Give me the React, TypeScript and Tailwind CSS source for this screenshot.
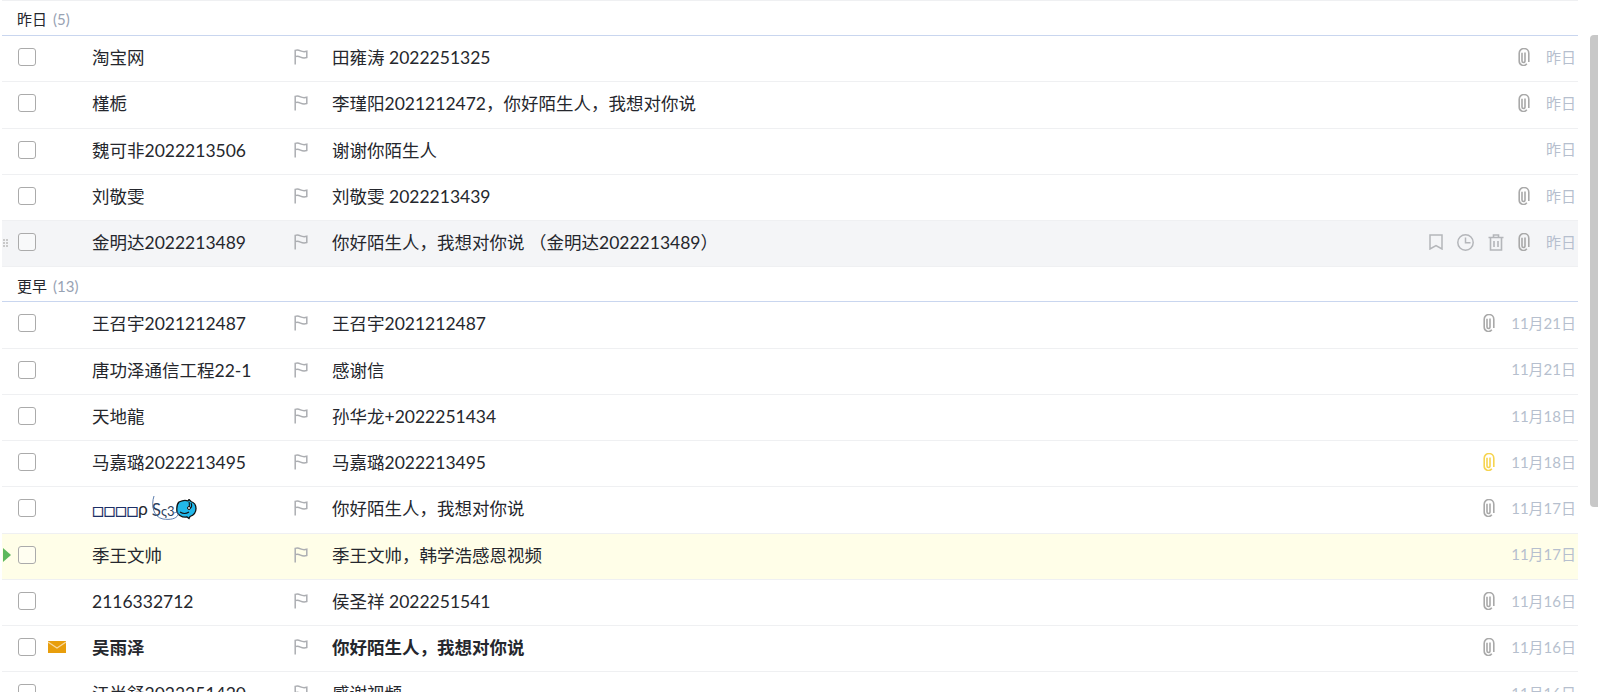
const font = { fontFamily: 'Lato, "Noto Sans CJK SC", "Noto Sans", sans-serif' };

type Mail = {
  name: string;
  subject: string;
  date: string;
  clip?: 'gray' | 'yellow';
  unread?: boolean;
  hover?: boolean;
  current?: boolean;
  fancy?: boolean;
};

const yesterday: Mail[] = [
  { name: '淘宝网', subject: '田雍涛 2022251325', date: '昨日', clip: 'gray' },
  { name: '槿栀', subject: '李瑾阳2021212472，你好陌生人，我想对你说', date: '昨日', clip: 'gray' },
  { name: '魏可非2022213506', subject: '谢谢你陌生人', date: '昨日' },
  { name: '刘敬雯', subject: '刘敬雯 2022213439', date: '昨日', clip: 'gray' },
  { name: '金明达2022213489', subject: '你好陌生人，我想对你说 （金明达2022213489）', date: '昨日', clip: 'gray', hover: true },
];

const earlier: Mail[] = [
  { name: '王召宇2021212487', subject: '王召宇2021212487', date: '11月21日', clip: 'gray' },
  { name: '唐功泽通信工程22-1', subject: '感谢信', date: '11月21日' },
  { name: '天地龍', subject: '孙华龙+2022251434', date: '11月18日' },
  { name: '马嘉璐2022213495', subject: '马嘉璐2022213495', date: '11月18日', clip: 'yellow' },
  { name: 'ρ', subject: '你好陌生人，我想对你说', date: '11月17日', clip: 'gray', fancy: true },
  { name: '季王文帅', subject: '季王文帅，韩学浩感恩视频', date: '11月17日', current: true },
  { name: '2116332712', subject: '侯圣祥 2022251541', date: '11月16日', clip: 'gray' },
  { name: '吴雨泽', subject: '你好陌生人，我想对你说', date: '11月16日', clip: 'gray', unread: true },
  { name: '江尚舒2023251420', subject: '感谢视频', date: '11月16日' },
];

function FlagIcon() {
  return (
    <svg width="14" height="16" viewBox="0 0 14 16" fill="none" stroke="#acaeb2" strokeWidth="1.5">
      <path d="M1.2 15.5V1.4C3 .9 4.6 1 6.5 1.900c2 .9 3.900 1 6.300.4v6.200c-2.400.7-4.300.5-6.300-.4-1.900-.9-3.500-1-5.300-.5" />
    </svg>
  );
}

function ClipIcon({ color }: { color: 'gray' | 'yellow' }) {
  return (
    <svg width="12" height="18" viewBox="0 0 12 18" fill="none" stroke={color === 'yellow' ? '#f6d44f' : '#a9a9a9'} strokeWidth="1.6">
      <path d="M10.800 14V5.300a4.800 4.800 0 0 0-9.600 0v8a4.200 4.200 0 0 0 7.600 2.400M4 4.800v8.200a1.500 1.500 0 0 0 3 0V4.600" />
    </svg>
  );
}

function BookmarkIcon() {
  return (
    <svg width="14" height="16" viewBox="0 0 14 16" fill="none" stroke="#b4b6ba" strokeWidth="1.5">
      <path d="M1 1h12v14l-6-3.500L1 15z" />
    </svg>
  );
}

function ClockIcon() {
  return (
    <svg width="17" height="17" viewBox="0 0 17 17" fill="none" stroke="#b4b6ba" strokeWidth="1.5">
      <circle cx="8.500" cy="8.500" r="7.700" />
      <path d="M8.500 3.500v5.200h5" />
    </svg>
  );
}

function TrashIcon() {
  return (
    <svg width="16" height="17" viewBox="0 0 16 17" fill="none" stroke="#b4b6ba" strokeWidth="1.6">
      <path d="M.5 3.500h15M5.500 3V1h5v2M2.500 3.500V16h11V3.500M6 7v6M10 7v6" />
    </svg>
  );
}

function Envelope() {
  return (
    <svg width="18" height="12" viewBox="0 0 18 12" className="block">
      <rect width="18" height="12" fill="#e89e0c" />
      <path d="M0 1l9 6 9-6" fill="none" stroke="#f7d9a0" strokeWidth="1.2" />
    </svg>
  );
}

function Fish() {
  return (
    <svg width="21" height="21" viewBox="0 0 21 21" className="block">
      <path d="M3 3c3-1.500 7-2 9-1l1-1.500 2 2c3 1 5 4 5 7 0 4-3 7-6 8l-1 2-2-1.500c-4 .5-8-1-10-5C.5 9 1 5 3 3z" fill="#22b8ea" stroke="#111" strokeWidth="1.300" />
      <path d="M13 3c1 3-.5 5 1 6 2 0 2-3 1-5M4 13c3 2 6 2 9 0" fill="none" stroke="#111" strokeWidth="1.100" />
      <circle cx="13" cy="9" r="1.500" fill="#fff" stroke="#111" />
    </svg>
  );
}

function Squiggle() {
  return (
    <svg width="28" height="26" viewBox="0 0 28 26" fill="none" className="absolute left-0 top-[-2px]" stroke="#4b6fa5" strokeWidth="0.900">
      <path d="M2 1C-1 10 1 22 11 24c7 1 13 0 15-4 1-3-2-3-4-2" />
    </svg>
  );
}

function MailRow({ mail }: { mail: Mail }) {
  const bg = mail.hover ? 'bg-[#f4f5f7]' : mail.current ? 'bg-[#fffee8]' : 'bg-white';
  return (
    <div className={`relative flex h-[46.25px] items-center border-b border-[#eff0f2] pb-[3px] ${bg}`}>
      {mail.hover && (
        <div className="absolute left-[1px] top-[18px] grid grid-cols-2 gap-[1px]">
          <i className="h-[2px] w-[2px] bg-[#c9c9c9]" />
          <i className="h-[2px] w-[2px] bg-[#c9c9c9]" />
          <i className="h-[2px] w-[2px] bg-[#c9c9c9]" />
          <i className="h-[2px] w-[2px] bg-[#c9c9c9]" />
          <i className="h-[2px] w-[2px] bg-[#c9c9c9]" />
          <i className="h-[2px] w-[2px] bg-[#c9c9c9]" />
        </div>
      )}
      {mail.current && (
        <div className="absolute left-[1px] top-[14px] h-0 w-0 border-y-[7px] border-l-[8px] border-y-transparent border-l-[#5cb85c]" />
      )}
      <div className="ml-[16px] h-[18px] w-[18px] rounded-[3px] border-[1.5px] border-[#ababab] bg-white/40" />
      <div className="ml-[12px] flex w-[18px] justify-center">{mail.unread && <Envelope />}</div>
      <div className={`ml-[26px] flex w-[201px] items-center pt-[2px] text-[17.5px] text-[#25272d] ${mail.unread ? 'font-bold' : ''}`}>
        {mail.fancy && <span className="text-[20px] leading-none tracking-[-0.5px] text-[#1c2f66]">□□□□</span>}
        {mail.name}
        {mail.fancy && (
          <span className="relative ml-[4px] flex items-center">
            <Squiggle />
            <span className="text-[17px] text-[#2d3e5c]">S</span>
            <span className="mr-[1px] mt-[4px] text-[13px] text-[#2d3e5c]">ς3</span>
            <Fish />
          </span>
        )}
      </div>
      <div className="ml-[1px] flex w-[38px]">
        <FlagIcon />
      </div>
      <div className={`flex-1 pt-[2px] text-[17.5px] text-[#25272d] ${mail.unread ? 'font-bold' : ''}`}>{mail.subject}</div>
      <div className="flex items-center">
        {mail.hover && (
          <div className="mr-[14px] flex items-center gap-[14px]">
            <BookmarkIcon />
            <ClockIcon />
            <TrashIcon />
          </div>
        )}
        {mail.clip && (
          <div className="mr-[16px] flex">
            <ClipIcon color={mail.clip} />
          </div>
        )}
        <div className="mr-[2px] text-[15px] text-[#b6bfce]">{mail.date}</div>
      </div>
    </div>
  );
}

function Group({ title, count, mails }: { title: string; count: number; mails: Mail[] }) {
  return (
    <section>
      <div className="flex h-[35px] items-center gap-[6px] border-b border-[#c9d6ef] pl-[15px] pt-[3px] text-[15px]">
        <span className="text-[#25272d]">{title}</span>
        <span className="text-[#98a2b3]">({count})</span>
      </div>
      {mails.map((m) => (
        <MailRow key={m.name} mail={m} />
      ))}
    </section>
  );
}

export default function App() {
  return (
    <div className="flex h-[692px] overflow-hidden bg-white" style={font}>
      <div className="ml-[2px] w-[1576px] border-t border-[#eff0f2]">
        <Group title="昨日" count={5} mails={yesterday} />
        <Group title="更早" count={13} mails={earlier} />
      </div>
      <div className="ml-[12px] mt-[35px] h-[472px] w-[8px] rounded-tl-[4px] rounded-bl-[4px] bg-[#c8c8c8]" />
    </div>
  );
}
